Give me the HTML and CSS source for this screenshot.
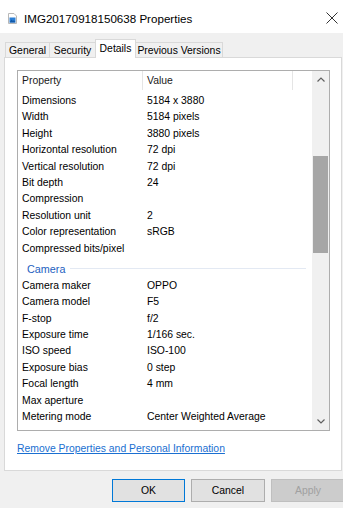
FILE: index.html
```html
<!DOCTYPE html>
<html>
<head>
<meta charset="utf-8">
<link rel="stylesheet" href="styles.css">
</head>
<body>
<div class="window">
  <div class="titlebar">
    <svg class="file-icon" width="9" height="11" viewBox="0 0 9 11">
      <path d="M0.5 0.5 H6 L8.5 3 V10.5 H0.5 Z" fill="#fff" stroke="#b8b8b8"/>
      <rect x="1.5" y="4.5" width="6" height="5" fill="#2b7fd6"/>
      <path d="M1.5 9.5 L3.5 6.5 L5 8 L6 7 L7.5 9.5 Z" fill="#1259a8"/>
    </svg>
    <span class="title">IMG20170918150638 Properties</span>
    <svg class="close" width="12" height="12" viewBox="0 0 12 12">
      <path d="M0.5 0.5 L11.5 11.5 M11.5 0.5 L0.5 11.5" stroke="#333" stroke-width="1"/>
    </svg>
  </div>
  <div class="client">
    <div class="tabs">
      <div class="tab t-general">General</div>
      <div class="tab t-security">Security</div>
      <div class="tab selected t-details">Details</div>
      <div class="tab t-previous">Previous Versions</div>
    </div>
    <div class="panel">
      <div class="list">
        <div class="list-main">
          <div class="list-head">
            <div class="hcell col-name">Property</div>
            <div class="hcell col-value">Value</div>
            <div class="hcell col-rest"></div>
          </div>
          <div class="list-body">
            <div class="row"><span class="col-name">Dimensions</span><span class="col-value">5184 x 3880</span></div>
            <div class="row"><span class="col-name">Width</span><span class="col-value">5184 pixels</span></div>
            <div class="row"><span class="col-name">Height</span><span class="col-value">3880 pixels</span></div>
            <div class="row"><span class="col-name">Horizontal resolution</span><span class="col-value">72 dpi</span></div>
            <div class="row"><span class="col-name">Vertical resolution</span><span class="col-value">72 dpi</span></div>
            <div class="row"><span class="col-name">Bit depth</span><span class="col-value">24</span></div>
            <div class="row"><span class="col-name">Compression</span><span class="col-value"></span></div>
            <div class="row"><span class="col-name">Resolution unit</span><span class="col-value">2</span></div>
            <div class="row"><span class="col-name">Color representation</span><span class="col-value">sRGB</span></div>
            <div class="row"><span class="col-name">Compressed bits/pixel</span><span class="col-value"></span></div>
            <div class="group"><span class="group-title">Camera</span><span class="group-rule"></span></div>
            <div class="row"><span class="col-name">Camera maker</span><span class="col-value">OPPO</span></div>
            <div class="row"><span class="col-name">Camera model</span><span class="col-value">F5</span></div>
            <div class="row"><span class="col-name">F-stop</span><span class="col-value">f/2</span></div>
            <div class="row"><span class="col-name">Exposure time</span><span class="col-value">1/166 sec.</span></div>
            <div class="row"><span class="col-name">ISO speed</span><span class="col-value">ISO-100</span></div>
            <div class="row"><span class="col-name">Exposure bias</span><span class="col-value">0 step</span></div>
            <div class="row"><span class="col-name">Focal length</span><span class="col-value">4 mm</span></div>
            <div class="row"><span class="col-name">Max aperture</span><span class="col-value"></span></div>
            <div class="row"><span class="col-name">Metering mode</span><span class="col-value">Center Weighted Average</span></div>
          </div>
        </div>
        <div class="scrollbar">
          <div class="sb-arrow">
            <svg width="8" height="5" viewBox="0 0 8 5"><path d="M0.5 4.5 L4 1 L7.5 4.5" fill="none" stroke="#606060" stroke-width="1.2"/></svg>
          </div>
          <div class="sb-track"><div class="sb-thumb"></div></div>
          <div class="sb-arrow">
            <svg width="8" height="5" viewBox="0 0 8 5"><path d="M0.5 0.5 L4 4 L7.5 0.5" fill="none" stroke="#606060" stroke-width="1.2"/></svg>
          </div>
        </div>
      </div>
      <a class="link" href="#">Remove Properties and Personal Information</a>
    </div>
    <div class="buttons">
      <div class="btn default">OK</div>
      <div class="btn">Cancel</div>
      <div class="btn disabled">Apply</div>
    </div>
  </div>
</div>
</body>
</html>
```
FILE: styles.css
```css
html, body {
  margin: 0;
  padding: 0;
}
body {
  width: 343px;
  height: 508px;
  overflow: hidden;
  font-family: "Liberation Sans", Arial, sans-serif;
  font-size: 10.4px;
  color: #000;
  background: #f0f0f0;
}
.window {
  display: flex;
  flex-direction: column;
  height: 508px;
}
.titlebar {
  height: 33px;
  background: #fff;
  display: flex;
  align-items: center;
  padding: 3px 5px 0 8px;
  box-sizing: border-box;
}
.file-icon {
  flex: none;
  margin-right: 7px;
}
.title {
  font-size: 11.6px;
  color: #000;
  white-space: nowrap;
}
.close {
  margin-left: auto;
}
.client {
  flex: 1;
  background: #f0f0f0;
  padding: 6px 0 0 4px;
  display: flex;
  flex-direction: column;
}
.tabs {
  display: flex;
  align-items: flex-end;
  height: 18px;
  padding-left: 1px;
  position: relative;
  z-index: 1;
}
.tab {
  height: 15px;
  box-sizing: border-box;
  border: 1px solid #d9d9d9;
  border-bottom: none;
  background: #f0f0f0;
  text-align: center;
  line-height: 15px;
  white-space: nowrap;
  margin-right: -1px;
}
.tab.selected {
  height: 19px;
  margin-bottom: -1px;
  background: #fff;
  line-height: 17px;
}
.t-general { width: 45px; }
.t-security { width: 47px; }
.t-details { width: 41px; }
.t-previous { width: 88px; }
.panel {
  width: 338px;
  height: 414px;
  box-sizing: border-box;
  background: #fff;
  border: 1px solid #d9d9d9;
  padding: 12px 0 0 12px;
  display: flex;
  flex-direction: column;
}
.list {
  width: 313px;
  height: 361px;
  box-sizing: border-box;
  border: 1px solid #adadad;
  display: flex;
  overflow: hidden;
}
.list-main {
  flex: 1;
  display: flex;
  flex-direction: column;
  overflow: hidden;
}
.list-head {
  display: flex;
  height: 19px;
  flex: none;
}
.hcell {
  box-sizing: border-box;
  line-height: 19px;
  border-right: 1px solid #e5e5e5;
  color: #1a1a1a;
}
.hcell.col-rest {
  flex: 1;
  border-right: none;
}
.col-name {
  width: 125px;
  padding-left: 4px;
  box-sizing: border-box;
  flex: none;
  white-space: nowrap;
}
.col-value {
  width: 150px;
  padding-left: 4px;
  box-sizing: border-box;
  flex: none;
  white-space: nowrap;
}
.list-body {
  padding-top: 3px;
}
.row {
  display: flex;
  height: 16.4px;
  line-height: 16.4px;
}
.group {
  display: flex;
  align-items: center;
  height: 21px;
  padding: 3px 6px 0 9px;
  box-sizing: border-box;
}
.group-title {
  color: #1e5fbf;
  font-size: 10.8px;
}
.group-rule {
  flex: 1;
  height: 1px;
  margin-left: 5px;
  background: #e3e9f3;
}
.scrollbar {
  width: 17px;
  flex: none;
  background: #f0f0f0;
  display: flex;
  flex-direction: column;
}
.sb-arrow {
  height: 17px;
  display: flex;
  align-items: center;
  justify-content: center;
  flex: none;
}
.sb-track {
  flex: 1;
}
.sb-thumb {
  margin: 68px 1px 0 1px;
  height: 97px;
  background: #a6a6a6;
}
.link {
  margin-top: 11px;
  line-height: 14px;
  color: #1a6fd1;
  text-decoration: underline;
  white-space: nowrap;
  align-self: flex-start;
}
.buttons {
  display: flex;
  gap: 6px;
  padding-left: 108px;
  margin-top: 8px;
}
.btn {
  width: 74px;
  height: 23px;
  box-sizing: border-box;
  border: 1px solid #adadad;
  background: #e1e1e1;
  text-align: center;
  line-height: 21px;
  flex: none;
}
.btn.default {
  width: 73px;
  border-color: #0078d7;
}
.btn.disabled {
  background: #cccccc;
  border-color: #bfbfbf;
  color: #a0a0a0;
}
```
